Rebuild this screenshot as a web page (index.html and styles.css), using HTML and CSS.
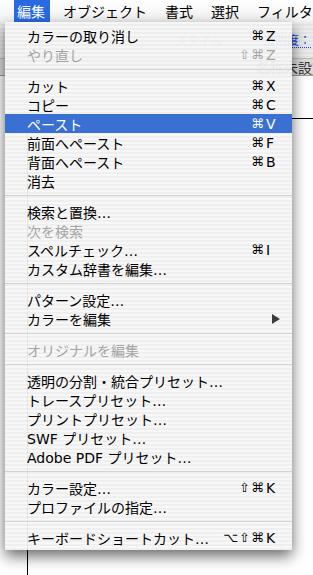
FILE: index.html
```html
<!DOCTYPE html>
<html lang="ja">
<head>
<meta charset="UTF-8" />
<title>編集メニュー</title>
<meta name="viewport" content="width=device-width, initial-scale=1.0" />
<link rel="stylesheet" href="styles.css">
</head>
<body>
<div class="menubar">
    <span class="title active">編集</span>
    <span class="title">オブジェクト</span>
    <span class="title">書式</span>
    <span class="title">選択</span>
    <span class="title">フィルタ</span>
</div>
<div class="toolbar">
    <span class="tool">スタイル</span>
    <span class="link">透明度：</span>
</div>
<div class="tabs">
    <span class="doc">名称未設定</span>
</div>
<div class="canvas">
    <div class="artboard"></div>
</div>

<div class="menu">
    <div class="item"><span class="label">カラーの取り消し</span><span class="keys"><span class="mods">⌘</span><span class="letter">Z</span></span></div>
    <div class="item off"><span class="label">やり直し</span><span class="keys"><span class="mods">⇧⌘</span><span class="letter">Z</span></span></div>
    <div class="sep"></div>
    <div class="item"><span class="label">カット</span><span class="keys"><span class="mods">⌘</span><span class="letter">X</span></span></div>
    <div class="item"><span class="label">コピー</span><span class="keys"><span class="mods">⌘</span><span class="letter">C</span></span></div>
    <div class="item on"><span class="label">ペースト</span><span class="keys"><span class="mods">⌘</span><span class="letter">V</span></span></div>
    <div class="item"><span class="label">前面へペースト</span><span class="keys"><span class="mods">⌘</span><span class="letter">F</span></span></div>
    <div class="item"><span class="label">背面へペースト</span><span class="keys"><span class="mods">⌘</span><span class="letter">B</span></span></div>
    <div class="item"><span class="label">消去</span></div>
    <div class="sep"></div>
    <div class="item"><span class="label">検索と置換…</span></div>
    <div class="item off"><span class="label">次を検索</span></div>
    <div class="item"><span class="label">スペルチェック…</span><span class="keys"><span class="mods">⌘</span><span class="letter">I</span></span></div>
    <div class="item"><span class="label">カスタム辞書を編集…</span></div>
    <div class="sep"></div>
    <div class="item"><span class="label">パターン設定…</span></div>
    <div class="item"><span class="label">カラーを編集</span><span class="arrow"></span></div>
    <div class="sep"></div>
    <div class="item off"><span class="label">オリジナルを編集</span></div>
    <div class="sep"></div>
    <div class="item"><span class="label">透明の分割・統合プリセット…</span></div>
    <div class="item"><span class="label">トレースプリセット…</span></div>
    <div class="item"><span class="label">プリントプリセット…</span></div>
    <div class="item"><span class="label">SWF プリセット…</span></div>
    <div class="item"><span class="label">Adobe PDF プリセット…</span></div>
    <div class="sep"></div>
    <div class="item"><span class="label">カラー設定…</span><span class="keys"><span class="mods">⇧⌘</span><span class="letter">K</span></span></div>
    <div class="item"><span class="label">プロファイルの指定…</span></div>
    <div class="sep"></div>
    <div class="item"><span class="label">キーボードショートカット…</span><span class="keys"><span class="mods">⌥⇧⌘</span><span class="letter">K</span></span></div>
</div>
</body>
</html>
```

FILE: styles.css
```css
body {
    margin: 0;
    height: 100vh;
    position: relative;
    display: flex;
    flex-direction: column;
    overflow: hidden;
    background: #fff;
    font-family: "DejaVu Sans", "Noto Sans CJK JP", sans-serif;
    font-size: 14px;
    color: #000;
}

/* menu bar */
.menubar {
    height: 22px;
    flex: none;
    display: flex;
    padding-left: 14px;
    background: linear-gradient(#fefefe, #f3f3f3);
    white-space: nowrap;
}
.title {
    font-family: "Noto Sans CJK JP", sans-serif;
    line-height: 22px;
    padding: 0 5px 0 3px;
    margin-right: 10px;
}
.title.active {
    background: #2a6ae0;
    color: #fff;
}

/* window behind the menu */
.toolbar {
    height: 36px;
    flex: none;
    display: flex;
    align-items: center;
    gap: 40px;
    padding-left: 175px;
    background: repeating-linear-gradient(#ececec 0 2px, #e4e4e4 2px 4px);
    font-family: "Noto Sans CJK JP", sans-serif;
    font-size: 12px;
    white-space: nowrap;
}
.tool {
    color: #888;
}
.link {
    color: #1a3ee0;
    border-bottom: 1px dotted #1a3ee0;
    line-height: 14px;
}
.tabs {
    height: 16px;
    flex: none;
    padding-left: 256px;
    background: #dcdcdc;
    border-top: 1px solid #bdbdbd;
    border-bottom: 1px solid #9a9a9a;
    font-family: "Noto Sans CJK JP", sans-serif;
    font-size: 14px;
    line-height: 16px;
    color: #333;
    white-space: nowrap;
}
.canvas {
    flex: 1;
    padding: 42px 0 0 27px;
}
.artboard {
    height: 100%;
    border-top: 1px solid #000;
    border-left: 1px solid #000;
}

/* pull-down menu */
.menu {
    position: absolute;
    left: 5px;
    top: 22px;
    width: 287px;
    padding: 4px 0 3px;
    background: repeating-linear-gradient(rgba(247,247,247,0.94) 0 2px, rgba(238,238,238,0.94) 2px 4px);
    box-shadow: 0 6px 14px rgba(0,0,0,0.6);
}
.item {
    height: 19px;
    display: flex;
    align-items: center;
    padding: 0 12px 0 22px;
    white-space: nowrap;
}
.item .label {
    flex: 1;
}
.item.off {
    color: #a4a4a4;
}
.item.on {
    background: #3a70d2;
    color: #fff;
}
.keys {
    display: flex;
    font-size: 13px;
}
.mods {
    letter-spacing: 1px;
}
.letter {
    width: 14px;
    padding-left: 1px;
    font-size: 14px;
}
.arrow {
    width: 0;
    height: 0;
    border-top: 5px solid transparent;
    border-bottom: 5px solid transparent;
    border-left: 8px solid #3c3c3c;
}
.sep {
    height: 1px;
    margin: 5px 0 6px;
    background: #d2d2d2;
}
```
